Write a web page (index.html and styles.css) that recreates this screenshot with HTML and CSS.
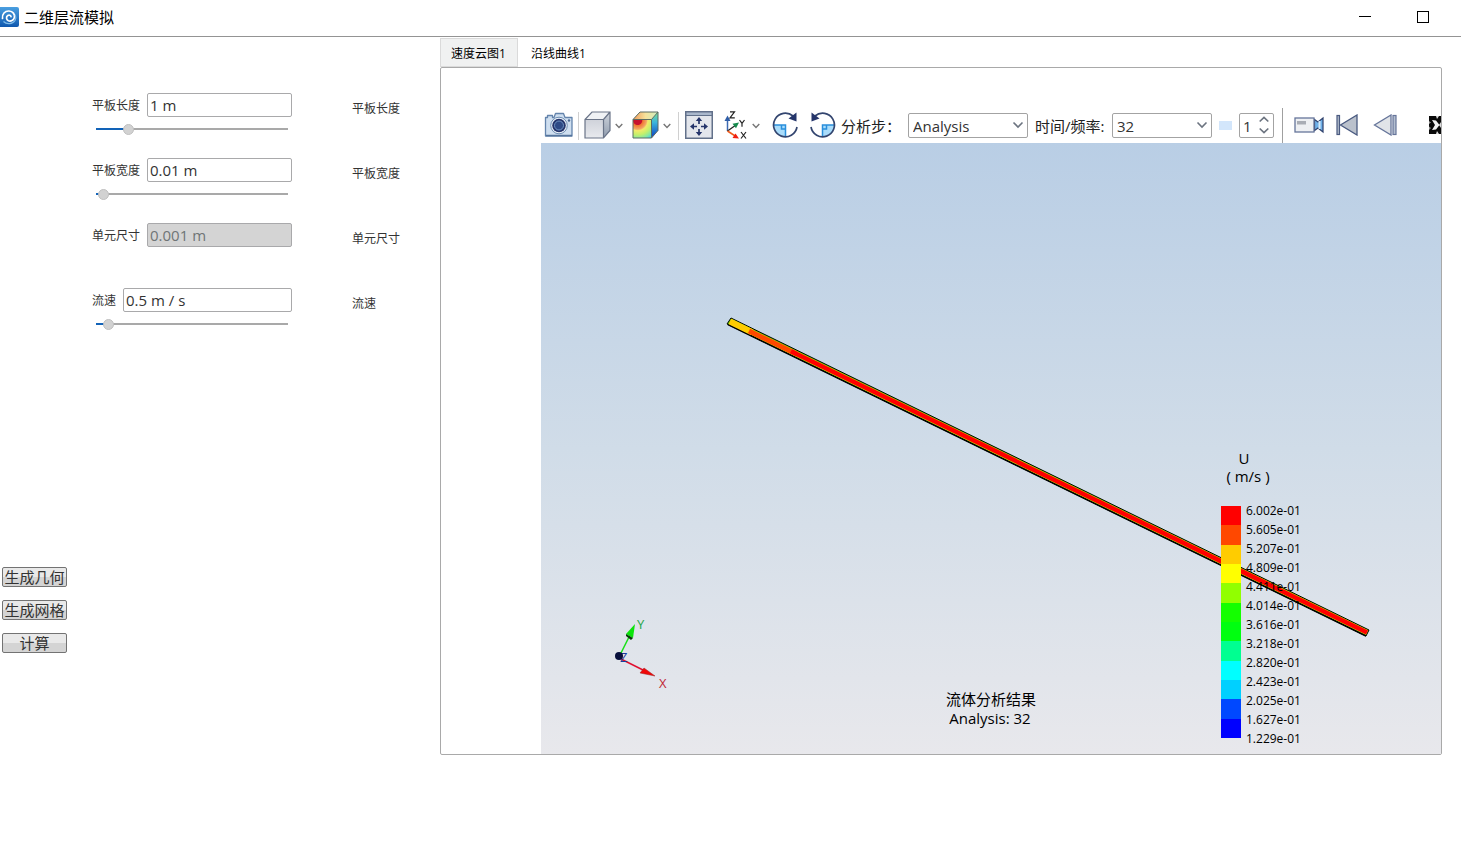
FILE: index.html
```html
<!DOCTYPE html>
<html lang="zh-CN">
<head>
<meta charset="utf-8">
<title>二维层流模拟</title>
<link rel="stylesheet" href="styles.css">
</head>
<body>
<header class="titlebar">
  <svg class="logo" width="19" height="20" viewBox="0 0 19 20" aria-hidden="true">
    <defs><linearGradient id="lg" x1="0" y1="0" x2="0" y2="1"><stop offset="0" stop-color="#4a9fe0"/><stop offset="1" stop-color="#0f58ae"/></linearGradient></defs>
    <rect x="-3" width="22" height="20" rx="2" fill="url(#lg)"/>
    <path d="M2.500 11.500C1.800 7 5 3.800 9 4c4 .2 6 3.400 5.400 6.300-.6 3-3.600 4.500-6 3.500-2.200-1-2.600-4-.6-5.300 1.300-.8 3-.2 3.200 1.200" fill="none" stroke="#fff" stroke-width="1.700" stroke-linecap="round"/>
    <path d="M3.500 14.500c3 3.200 9 3 11.500-1 1-1.800 1-4 .3-5.800" fill="none" stroke="#7fbcea" stroke-width="1.200"/>
  </svg>
  <h1 class="title">二维层流模拟</h1>
  <button class="winbtn" aria-label="最小化"><svg width="12" height="12"><path d="M0 5.500h12" stroke="#000"/></svg></button>
  <button class="winbtn" aria-label="最大化"><svg width="12" height="12"><rect x=".5" y=".5" width="11" height="11" fill="none" stroke="#000"/></svg></button>
</header>
<main class="main">
  <aside class="side">
    <form class="form">
      <div class="row">
        <div class="field">
          <div class="line"><label for="len">平板长度</label><input class="text" id="len" type="text" value="1 m"></div>
          <input class="range" type="range" min="0" max="100" value="15" aria-label="平板长度" style="--fill:17%">
        </div>
        <span class="note">平板长度</span>
      </div>
      <div class="row">
        <div class="field">
          <div class="line"><label for="wid">平板宽度</label><input class="text" id="wid" type="text" value="0.01 m"></div>
          <input class="range" type="range" min="0" max="100" value="1" aria-label="平板宽度" style="--fill:3%">
        </div>
        <span class="note">平板宽度</span>
      </div>
      <div class="row">
        <div class="field">
          <div class="line"><label for="cell">单元尺寸</label><input class="text" id="cell" type="text" value="0.001 m" disabled></div>
        </div>
        <span class="note">单元尺寸</span>
      </div>
      <div class="row">
        <div class="field">
          <div class="line"><label for="vel">流速</label><input class="text" id="vel" type="text" value="0.5 m / s"></div>
          <input class="range" type="range" min="0" max="100" value="4" aria-label="流速" style="--fill:6%">
        </div>
        <span class="note">流速</span>
      </div>
    </form>
    <div class="actions">
      <button class="action">生成几何</button>
      <button class="action">生成网格</button>
      <button class="action">计算</button>
    </div>
  </aside>
  <section class="work">
    <div class="tabs" role="tablist">
      <button class="tab active" role="tab" aria-selected="true">速度云图1</button>
      <button class="tab" role="tab" aria-selected="false">沿线曲线1</button>
    </div>
    <div class="panel" role="tabpanel">
      <div class="toolbar">
        <button class="tool camera" aria-label="截图"><svg width="30" height="28" viewBox="0 0 30 28">
          <path d="M1.500 6.500h2l0-2h5l0 2h1.500l1.500-4h8l1.500 4h7V25H1.500z" fill="#cfdff0" stroke="#6484ac" stroke-width="1.300" stroke-linejoin="round"/><path d="M2 24.500h26" stroke="#55749c" stroke-width="1.500"/>
          <circle cx="15" cy="14.500" r="8.300" fill="#eef4fa" stroke="#6d8cb2"/><circle cx="15" cy="14.500" r="6.800" fill="#25356b"/><circle cx="15" cy="14.500" r="4.500" fill="#2e4a86" stroke="#6e93c3"/><circle cx="25" cy="9.500" r="1.200" fill="#4b6a94"/>
        </svg></button>
        <span class="sep"></span>
        <button class="tool" aria-label="显示模式"><svg width="28" height="28" viewBox="0 0 28 28">
          <defs><linearGradient id="gf" x1="0" y1="0" x2="0" y2="1"><stop offset="0" stop-color="#cfd2da"/><stop offset="1" stop-color="#e8eaee"/></linearGradient>
          <linearGradient id="gs" x1="0" y1="0" x2="0" y2="1"><stop offset="0" stop-color="#d0d5dd"/><stop offset="1" stop-color="#8f9bad"/></linearGradient></defs>
          <path d="M1 8.500L8 1h18l-6.500 7.500z" fill="#f0f2f5"/><path d="M19.500 8.500L26 1v18.500l-6.500 7.500z" fill="url(#gs)"/><path d="M1 8.500h18.500V27H1z" fill="url(#gf)"/>
          <path d="M1 8.500L8 1h18v18.500L19.500 27H1zh18.500V27M19.500 8.500L26 1" fill="none" stroke="#6a7488" stroke-width="1.200"/>
        </svg></button>
        <button class="drop" aria-label="显示模式选项"><svg width="8" height="6"><path d="M.7 1L4 4.500 7.300 1" fill="none" stroke="#777" stroke-width="1.400"/></svg></button>
        <button class="tool" aria-label="云图模式"><svg width="28" height="28" viewBox="0 0 28 28">
          <defs><radialGradient id="gc" cx=".25" cy=".05" r="1.250"><stop offset=".18" stop-color="#c8102e"/><stop offset=".22" stop-color="#f07830"/><stop offset=".38" stop-color="#f2a566"/><stop offset=".44" stop-color="#f3ea6a"/><stop offset=".62" stop-color="#c4f06c"/><stop offset=".8" stop-color="#7fe8a8"/><stop offset=".9" stop-color="#4fd0e8"/><stop offset="1" stop-color="#1b66e0"/></radialGradient>
          <linearGradient id="gr" x1="0" y1="0" x2="0" y2="1"><stop offset="0" stop-color="#7ee08c"/><stop offset=".4" stop-color="#3ab6dc"/><stop offset="1" stop-color="#0b3dc0"/></linearGradient>
          <linearGradient id="gt"><stop offset="0" stop-color="#f09a5c"/><stop offset=".5" stop-color="#f6e29a"/><stop offset="1" stop-color="#cdeec0"/></linearGradient></defs>
          <path d="M1 8.500L8 1h18l-6.500 7.500z" fill="url(#gt)"/><path d="M19.500 8.500L26 1v18.500l-6.500 7.500z" fill="url(#gr)"/><path d="M1 8.500h18.500V27H1z" fill="url(#gc)"/>
          <path d="M1 8.500L8 1h18v18.500L19.500 27H1zh18.500V27M19.500 8.500L26 1" fill="none" stroke="#5a6b62"/>
        </svg></button>
        <button class="drop" aria-label="云图选项"><svg width="8" height="6"><path d="M.7 1L4 4.500 7.300 1" fill="none" stroke="#777" stroke-width="1.400"/></svg></button>
        <span class="sep"></span>
        <button class="tool" aria-label="适应窗口"><svg width="28" height="28" viewBox="0 0 28 28">
          <rect x=".75" y=".75" width="26.500" height="26.500" fill="#e3e6ec" stroke="#62718a" stroke-width="1.500"/><path d="M1 1h26v3.500H1z" fill="#aab8cc" stroke="#62718a"/>
          <path d="M14 9v4M14 18v4M8 15.500h4M16 15.500h4" stroke="#25356b" stroke-width="1.700"/><path d="M14 6l-3.200 4h6.400zM14 25l-3.200-4h6.400zM5 15.500l4-3.200v6.400zM23 15.500l-4-3.200v6.400z" fill="#25356b"/>
        </svg></button>
        <button class="tool axes" aria-label="视图方向"><svg width="24" height="28" viewBox="0 0 24 28">
          <path d="M3.500 20V9" stroke="#3d6ab2" stroke-width="1.500"/><path d="M3.500 4.500L.5 10h6z" fill="#2f5ea8"/>
          <path d="M3.500 20L12 14" stroke="#222" stroke-width="1.300"/><path d="M15 11.500l-6.500 1.200 3.500 4.500z" fill="#158a4c"/>
          <path d="M3.500 20L12 25.500" stroke="#f15a1a" stroke-width="1.500"/><path d="M15 27.500l-3.500-5-3 4.500z" fill="#f01e10"/>
          <path d="M6 .8h4.500L6 6.800h4.800M15.500 9l2.500 3.300v3.500M20.500 9L18 12.300M17 21l5 6.500M22 21l-5 6.500" fill="none" stroke="#222" stroke-width="1.200"/>
        </svg></button>
        <button class="drop" aria-label="视图方向选项"><svg width="8" height="6"><path d="M.7 1L4 4.500 7.300 1" fill="none" stroke="#777" stroke-width="1.400"/></svg></button>
        <button class="tool turn" aria-label="顺时针旋转"><svg width="26" height="28" viewBox="0 0 26 28">
          <path d="M1.500 14h12v12A12 12 0 0 1 1.500 14z" fill="#a9dcfb"/><path d="M1.500 14h12v12M9.500 14v4h4" fill="none" stroke="#2a8fdc" stroke-width="1.500"/>
          <path d="M21 5A11.800 11.800 0 1 0 25 16" fill="none" stroke="#33456f" stroke-width="1.700"/><path d="M24.500 1.500v9l-8-3z" fill="#25356b"/>
        </svg></button>
        <button class="tool turn" aria-label="逆时针旋转"><svg width="26" height="28" viewBox="0 0 26 28">
          <g transform="matrix(-1 0 0 1 26 0)"><path d="M1.500 14h12v12A12 12 0 0 1 1.500 14z" fill="#a9dcfb"/><path d="M1.500 14h12v12M9.500 14v4h4" fill="none" stroke="#2a8fdc" stroke-width="1.500"/>
          <path d="M21 5A11.800 11.800 0 1 0 25 16" fill="none" stroke="#33456f" stroke-width="1.700"/><path d="M24.500 1.500v9l-8-3z" fill="#25356b"/></g>
        </svg></button>
        <label class="caption step" for="step">分析步：</label>
        <span class="pick wide"><select id="step"><option>Analysis</option></select><svg class="arrow" width="12" height="8"><path d="M1.500 1.500L6 6l4.500-4.500" fill="none" stroke="#6c7480" stroke-width="1.600"/></svg></span>
        <label class="caption freq" for="freq">时间/频率:</label>
        <span class="pick"><select id="freq"><option>32</option></select><svg class="arrow" width="12" height="8"><path d="M1.500 1.500L6 6l4.500-4.500" fill="none" stroke="#6c7480" stroke-width="1.600"/></svg></span>
        <span class="chip"></span>
        <span class="spin"><input type="number" value="1" aria-label="帧步长"><svg class="arrow" width="10" height="18"><path d="M.7 5.500L5 1.500l4.300 4M.7 12.500l4.300 4 4.300-4" fill="none" stroke="#6c7480" stroke-width="1.700"/></svg></span>
        <span class="sep tall"></span>
        <button class="tool rec" aria-label="录制动画"><svg width="30" height="18" viewBox="0 0 30 18">
          <path d="M20.500 3.500l3.500 2.500 5-4v14l-5-4-3.500 2.500z" fill="#6fb0e8" stroke="#2d3f6b" stroke-width="1.200"/><path d="M25.500 5v8" stroke="#d6ebfa" stroke-width="2"/><rect x="1" y="2" width="19" height="14" fill="#eef0f3" stroke="#66759a" stroke-width="1.300"/><rect x="3" y="5" width="9" height="3.500" fill="#a9adb5"/>
        </svg></button>
        <button class="tool first" aria-label="首帧"><svg width="22" height="22" viewBox="0 0 22 22">
          <path d="M21 1v20L4.500 11z" fill="#bac1cc" stroke="#4a5a80" stroke-width="1.300"/><rect x="1" y="1.500" width="2.500" height="19" fill="#aeb8c8" stroke="#4a5a80" stroke-width="1.200"/>
        </svg></button>
        <button class="tool prev" aria-label="上一帧"><svg width="24" height="22" viewBox="0 0 24 22">
          <path d="M18 1v20L1.500 11z" fill="#e1e4e8" stroke="#66759a" stroke-width="1.300"/><rect x="20" y="1.500" width="3" height="19" fill="#b4bfd0" stroke="#66759a" stroke-width="1.200"/>
        </svg></button>
        <button class="tool more" aria-label="更多"><svg width="12" height="18" viewBox="0 0 12 18">
          <path d="M0 0h12v18H0z" fill="#0a0a0a"/><path d="M0 5l2 1.500L0 8zM0 10.500L2 12l-2 2z" fill="#999"/><path d="M3 4l4 .5L10.500 9 7 13.500 3 14l3-5z" fill="#f4f4f4"/><path d="M7 0h3L8 3zM7 18h3l-2-3zM12 6v6l-2-3z" fill="#ddd"/>
        </svg></button>
      </div>
      <div class="view">
        <svg class="scene" viewBox="0 0 900 611" role="img" aria-label="流体分析结果云图">
          <path d="M190 175L828 487l-3 6L186 181z" fill="#5ed000" stroke="#000"/>
          <path d="M187 181.500L825 493" stroke="#000" stroke-width="1.500"/>
          <path d="M189 178.500L826 489.500" stroke="#d8c800" stroke-width="5"/>
          <path d="M189 178.500L211 189.200" stroke="#ffcc00" stroke-width="6"/>
          <path d="M208 188L256 211.200" stroke="#ff4800" stroke-width="5"/>
          <path d="M250 208.300L826 489.500" stroke="#f00" stroke-width="4.500"/>
          <g class="triad">
            <path d="M79 512l10-20" stroke="#19e019" stroke-width="1.500"/><path d="M94 481l-9 10 7 4z" fill="#0be40b"/><path d="M85 491l7 4-2 2-5-4z" fill="#063a08"/>
            <path d="M80 516l22 11" stroke="#e01030" stroke-width="1.500"/><path d="M114 533l-11-8-4 5z" fill="#f00808" stroke="#a02020" stroke-width=".5"/>
            <text x="79" y="519" fill="#1b3c9c" font-size="10">Z</text><circle cx="78" cy="513" r="4" fill="#07103c"/>
            <text x="96" y="486" fill="#24a548">Y</text><text x="118" y="545" fill="#c02835">X</text>
          </g>
          <g class="caption-text" text-anchor="middle"><text x="450" y="562">流体分析结果</text><text x="449" y="581">Analysis: 32</text></g>
          <g text-anchor="middle" class="unit"><text x="703" y="321">U</text><text x="707" y="339">( m/s )</text></g>
          <g shape-rendering="crispEdges">
            <path d="M680 363h20v19h-20z" fill="#f00"/><path d="M680 382h20v20h-20z" fill="#ff4800"/><path d="M680 402h20v19h-20z" fill="#ffcc00"/><path d="M680 421h20v19h-20z" fill="#ff0"/><path d="M680 440h20v20h-20z" fill="#91ff00"/><path d="M680 460h20v19h-20z" fill="#14ff00"/><path d="M680 479h20v19h-20z" fill="#00ff10"/><path d="M680 498h20v20h-20z" fill="#00ff91"/><path d="M680 518h20v19h-20z" fill="#0ff"/><path d="M680 537h20v19h-20z" fill="#00d0ff"/><path d="M680 556h20v20h-20z" fill="#0048ff"/><path d="M680 576h20v19h-20z" fill="#00f"/>
          </g>
          <g class="ticks"><text x="705" y="372">6.002e-01</text><text x="705" y="391">5.605e-01</text><text x="705" y="410">5.207e-01</text><text x="705" y="429">4.809e-01</text><text x="705" y="448">4.411e-01</text><text x="705" y="467">4.014e-01</text><text x="705" y="486">3.616e-01</text><text x="705" y="505">3.218e-01</text><text x="705" y="524">2.820e-01</text><text x="705" y="543">2.423e-01</text><text x="705" y="562">2.025e-01</text><text x="705" y="581">1.627e-01</text><text x="705" y="600">1.229e-01</text></g>
        </svg>
      </div>
    </div>
  </section>
</main>
</body>
</html>
```
FILE: styles.css
```css
* { box-sizing: border-box; }
body {
  margin: 0;
  background: #fff;
  color: #333;
  font: 15px/20px "Open Sans", "Noto Sans CJK SC", sans-serif;
}
button { padding: 0; border: 0; background: none; color: inherit; font: inherit; }
input, select { font: inherit; color: inherit; }
svg { display: block; }

.titlebar {
  display: flex;
  align-items: center;
  height: 37px;
  padding: 0 32px 3px 0;
  border-bottom: 1px solid #949494;
}
.title { flex: 1; margin: 0 0 0 5px; color: #000; font-size: 15px; font-weight: 400; }
.winbtn { margin-left: 46px; }

.main { display: flex; align-items: flex-start; }
.side { flex: none; width: 440px; padding-top: 56px; }
.form { padding-left: 92px; }
.row { display: flex; gap: 60px; height: 65px; }
.field { width: 200px; }
.line { display: flex; align-items: center; gap: 7px; font-size: 12px; }
.line label { flex: none; padding-top: 2px; }
.text {
  flex: 1;
  min-width: 0;
  height: 24px;
  padding: 0 2px;
  border: 1px solid #a9a9ab;
  border-radius: 2px;
  background: #fff;
  font-size: 15px;
}
.text:disabled { background: #d4d4d4; color: #6f7476; }
.note { padding-top: 6px; font-size: 12px; }
.range {
  display: block;
  width: 192px;
  height: 16px;
  margin: 4px 0 0 4px;
  appearance: none;
  background: linear-gradient(to right, #1263b8 var(--fill), #a9a9a9 var(--fill)) center / 100% 2px no-repeat;
}
.range::-webkit-slider-thumb {
  appearance: none;
  width: 11px;
  height: 11px;
  border: 1px solid #c0c0c0;
  border-radius: 50%;
  background: #d2d2d2;
}
.actions {
  display: flex;
  flex-direction: column;
  align-items: flex-start;
  gap: 13px;
  margin: 214px 0 0 2px;
}
.action {
  display: flex;
  justify-content: center;
  width: 65px;
  height: 20px;
  border: 1px solid #737373;
  border-radius: 2px;
  background: linear-gradient(#e9e9e9 50%, #d4d4d4 50%);
  line-height: 19px;
  white-space: nowrap;
}

.work { flex: 1; min-width: 0; margin: 1px 19px 0 0; }
.tabs { display: flex; }
.tab { height: 29px; padding: 2px 12px 0; border: 1px solid transparent; color: #000; font-size: 12px; }
.tab.active { padding: 2px 11px 0 10px; border-color: #dadada; background: #f0f1f1; }
.panel { padding: 40px 0 0 100px; border: 1px solid #a9a9a9; border-radius: 2px; }

.toolbar { display: flex; align-items: center; height: 35px; padding-left: 3px; overflow: hidden; }
.toolbar > * { flex: none; }
.tool svg { margin-bottom: 1px; }
.sep { width: 1px; height: 28px; margin: 0 5px 0 4px; background: #d0d0d0; }
.sep.tall { height: 35px; margin: 0 11px 0 8px; background: #a0a0a0; }
.drop { padding: 0 9px 0 3px; }
.drop + .sep { margin: 0 6px 0 -2px; }
.tool.axes { margin-left: 11px; }
.turn { margin-left: 12px; }
.axes + .drop { padding: 0 0 0 4px; }
.caption { color: #222; }
.step { width: 67px; margin-left: 5px; }
.freq { margin: 0 7px; width: 70px; white-space: nowrap; }
.pick, .spin { position: relative; width: 100px; height: 25px; }
.pick.wide { width: 120px; }
.pick select, .spin input {
  display: block;
  width: 100%;
  height: 25px;
  padding: 0 4px;
  border: 1px solid #a3a3a3;
  border-radius: 2px;
  background: #fff;
  appearance: none;
}
.spin input { padding: 0 3px; appearance: textfield; }
.spin input::-webkit-inner-spin-button { appearance: none; margin: 0; }
.spin { width: 35px; }
.arrow { position: absolute; top: 8px; right: 4px; pointer-events: none; }
.spin .arrow { top: 3px; right: 5px; }
.chip { width: 13px; height: 9px; margin: 0 7px; background: #d3e6fb; }
.first { margin-left: 12px; }
.prev { margin-left: 15px; }
.more { margin-left: 32px; }

.view { background: linear-gradient(#b9cee5, #d0dce8 50%, #e8e8ec); }
.scene { width: 100%; height: auto; color: #000; }
.scene text { font-family: "Open Sans", "Noto Sans CJK SC", sans-serif; }
.triad text { font-size: 13px; }
.caption-text { font-size: 15px; }
.unit { font-size: 15px; }
.ticks { font-size: 12px; }
```
